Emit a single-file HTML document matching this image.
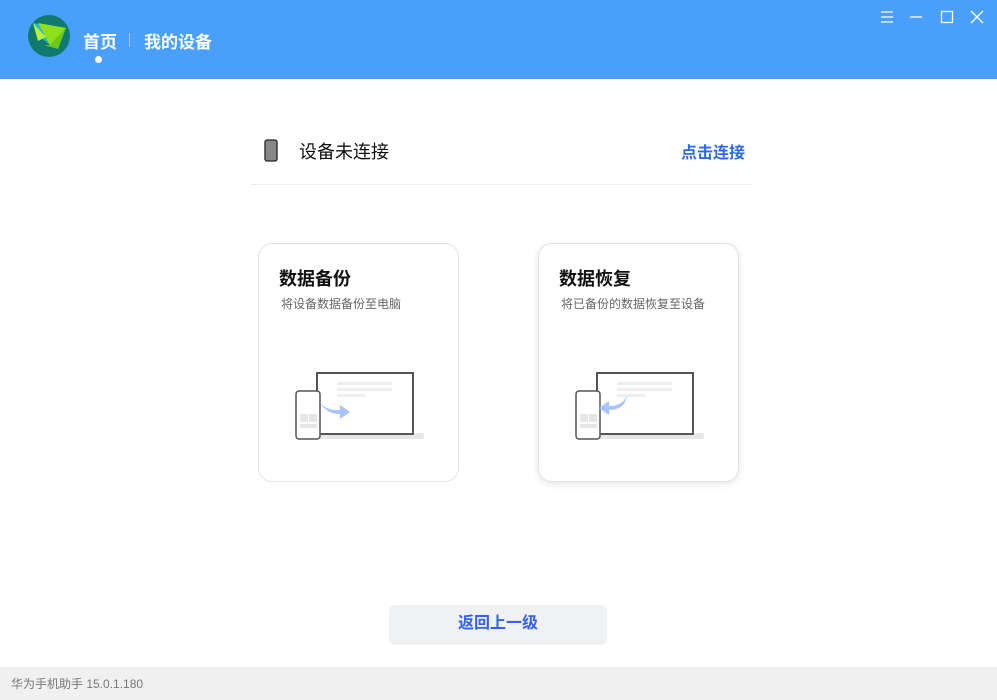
<!DOCTYPE html>
<html><head><meta charset="utf-8"><style>
*{margin:0;padding:0;box-sizing:border-box}
body{width:997px;height:700px;position:relative;background:#fff;font-family:"Liberation Sans","Noto Sans CJK SC",sans-serif;overflow:hidden}
.hdr{position:absolute;left:0;top:0;width:997px;height:79px;background:#4a9ffa}
.abs{position:absolute}
.card{position:absolute;top:243px;width:201px;height:239px;border:1px solid #e3e3e3;border-radius:14px;background:#fff}
.card h3{position:absolute;left:20px;top:21px;font-size:18px;font-weight:bold;color:#111}
.card p{position:absolute;left:22px;top:51px;font-size:12px;color:#666}
.foot{position:absolute;left:0;top:667px;width:997px;height:33px;background:#f0f0f0;font-size:12px;color:#777;padding:8px 0 0 11px}
</style></head><body>
<div class="hdr">
 <svg class="abs" style="left:28px;top:15px" width="42" height="42" viewBox="0 0 42 42">
  <circle cx="21" cy="21" r="21" fill="#117a6e"/>
  <polygon points="5,8 36,14 22,30 10,20" fill="#1fb6e8"/>
  <polygon points="10,8 22,30 38,13" fill="#8fe01c"/>
  <polygon points="5,8 18,22 10,26" fill="#b6f23a"/>
  <polygon points="16,30 22,30 38,13 30,34" fill="#6cc814"/>
 </svg>
 <div class="abs" style="left:83px;top:28px;font-size:17px;font-weight:bold;color:#fff">首页</div>
 <div class="abs" style="left:95px;top:56px;width:7px;height:7px;border-radius:50%;background:#fff"></div>
 <div class="abs" style="left:129px;top:33px;width:1px;height:14px;background:#a8ceff"></div>
 <div class="abs" style="left:144px;top:28px;font-size:17px;font-weight:bold;color:#fff">我的设备</div>
 <svg class="abs" style="left:880px;top:10px" width="110" height="16" viewBox="0 0 110 16" stroke="#fff" stroke-width="1.3" fill="none">
  <path d="M1 2h12M1 7h12M1 12h12"/>
  <path d="M30 7h12"/>
  <rect x="61.5" y="1.5" width="11" height="11"/>
  <path d="M91 1l12 12M103 1l-12 12"/>
 </svg>
</div>

<svg class="abs" style="left:264px;top:139px" width="14" height="23" viewBox="0 0 14 23">
 <rect x="1" y="1" width="12" height="21" rx="2" fill="#888" stroke="#222" stroke-width="1.3"/>
</svg>
<div class="abs" style="left:299px;top:138px;font-size:18px;color:#111">设备未连接</div>
<div class="abs" style="left:681px;top:139px;font-size:16px;font-weight:bold;color:#2d6ae0">点击连接</div>
<div class="abs" style="left:250px;top:184px;width:502px;height:1px;background:#eee"></div>

<div class="card" style="left:258px"><h3>数据备份</h3><p>将设备数据备份至电脑</p></div>
<div class="card" style="left:538px;box-shadow:0 2px 8px rgba(0,0,0,.1)"><h3>数据恢复</h3><p>将已备份的数据恢复至设备</p></div>

<svg class="abs" style="left:290px;top:368px" width="140" height="76" viewBox="0 0 140 76">
 <rect x="7" y="65" width="127" height="6" rx="2" fill="#e6e6e8"/>
 <rect x="27" y="5" width="96" height="61" fill="#fff" stroke="#555" stroke-width="2"/>
 <rect x="47" y="14" width="55" height="3" fill="#eee"/><rect x="47" y="20" width="55" height="3" fill="#eee"/><rect x="47" y="26" width="28" height="3" fill="#eee"/>
 <rect x="6" y="23" width="24" height="48" rx="3" fill="#fff" stroke="#555" stroke-width="1.5"/>
 <rect x="10" y="46" width="8" height="8" fill="#e6e6e8"/><rect x="19" y="46" width="8" height="8" fill="#e6e6e8"/><rect x="10" y="56" width="17" height="4" fill="#e6e6e8"/>
 <path d="M30 34q6 9 20 8v-5l10 7-10 7v-5q-14 0-20-12z" fill="#a9c4fb"/>
</svg>
<svg class="abs" style="left:570px;top:368px" width="140" height="76" viewBox="0 0 140 76">
 <rect x="7" y="65" width="127" height="6" rx="2" fill="#e6e6e8"/>
 <rect x="27" y="5" width="96" height="61" fill="#fff" stroke="#555" stroke-width="2"/>
 <rect x="47" y="14" width="55" height="3" fill="#eee"/><rect x="47" y="20" width="55" height="3" fill="#eee"/><rect x="47" y="26" width="28" height="3" fill="#eee"/>
 <rect x="6" y="23" width="24" height="48" rx="3" fill="#fff" stroke="#555" stroke-width="1.5"/>
 <rect x="10" y="46" width="8" height="8" fill="#e6e6e8"/><rect x="19" y="46" width="8" height="8" fill="#e6e6e8"/><rect x="10" y="56" width="17" height="4" fill="#e6e6e8"/>
 <path d="M57 27q-4 11-18 11v-5l-10 7 10 7v-5q16 0 18-15z" fill="#a9c4fb"/>
</svg>

<div class="abs" style="left:389px;top:605px;width:218px;height:40px;border-radius:6px;background:#f0f1f3;text-align:center;line-height:38px;font-size:16px;font-weight:bold;color:#3463e6">返回上一级</div>
<div class="foot">华为手机助手 15.0.1.180</div>
</body></html>
